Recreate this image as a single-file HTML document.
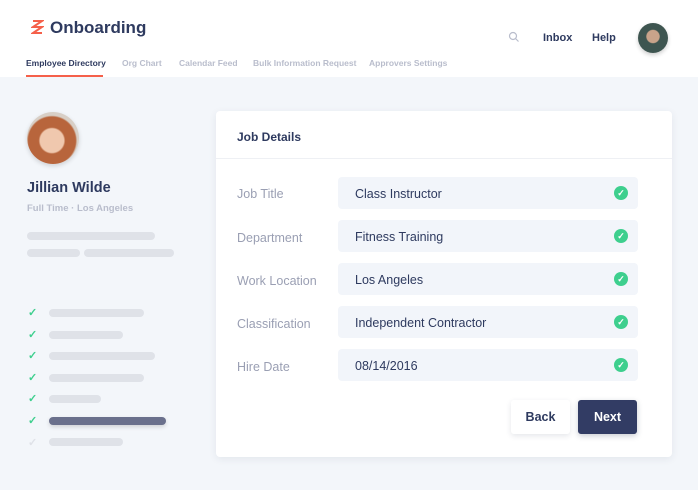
<!DOCTYPE html><html><head><style>
*{margin:0;padding:0;box-sizing:border-box}
body{width:698px;height:490px;overflow:hidden;background:#f3f6fa;font-family:"Liberation Sans",sans-serif;position:relative;color:#2e3a5f}
.a{position:absolute}
.hdr{left:0;top:0;width:698px;height:77px;background:#fff}
.tab{top:58px;font-size:8.5px;font-weight:bold;color:#b9bdcc}
.bar{height:8px;border-radius:4px;background:#dfe2e8}
.chk{color:#3ecf8e;font-size:11px;font-weight:bold}
.lbl{left:237px;font-size:12.5px;color:#9a9fb3}
.fld{left:338px;width:300px;height:32px;background:#f2f5fa;border-radius:4px;font-size:12.5px;color:#2e3a5f;padding:10px 0 0 17px}
.ok{position:absolute;right:10px;top:9px;width:14px;height:14px;border-radius:50%;background:#3ecf8e;color:#fff;font-size:9px;text-align:center;line-height:14px;font-weight:bold}
</style></head><body>
<div class="a hdr"></div>
<svg class="a" style="left:31px;top:19px" width="13" height="18" viewBox="0 0 13 18"><path d="M2 2h9L2 8l9 0L2 14h9" fill="none" stroke="#f5604a" stroke-width="2"/></svg>
<div class="a" style="left:50px;top:18px;font-size:17px;font-weight:bold;color:#2e3a5f">Onboarding</div>
<div class="a tab" style="left:26px;color:#2e3a5f">Employee Directory</div>
<div class="a" style="left:26px;top:75px;width:77px;height:2px;background:#f5604a"></div>
<div class="a tab" style="left:122px">Org Chart</div>
<div class="a tab" style="left:179px">Calendar Feed</div>
<div class="a tab" style="left:253px">Bulk Information Request</div>
<div class="a tab" style="left:369px">Approvers Settings</div>
<svg class="a" style="left:508px;top:31px" width="12" height="12"><circle cx="5" cy="5" r="3.5" fill="none" stroke="#b9bdcc" stroke-width="1.2"/><path d="M7.5 7.5l3 3" stroke="#b9bdcc" stroke-width="1.2"/></svg>
<div class="a" style="left:543px;top:32px;font-size:11px;font-weight:bold">Inbox</div>
<div class="a" style="left:592px;top:32px;font-size:11px;font-weight:bold">Help</div>
<div class="a" style="left:638px;top:23px;width:30px;height:30px;border-radius:50%;background:radial-gradient(circle at 50% 45%,#c9a38a 0 28%,#3e5550 32%);box-shadow:0 2px 4px rgba(0,0,0,.2)"></div>
<div class="a" style="left:27px;top:112px;width:52px;height:52px;border-radius:50%;background:radial-gradient(circle at 48% 55%,#f0c8ae 0 30%,#b8653c 34% 60%,#d8cfc6 64%);box-shadow:0 2px 5px rgba(0,0,0,.15)"></div>
<div class="a" style="left:27px;top:180px;font-size:14.5px;font-weight:bold">Jillian Wilde</div>
<div class="a" style="left:27px;top:203px;font-size:9.5px;font-weight:bold;color:#b9bdcc">Full Time · Los Angeles</div>
<div class="a bar" style="left:27px;top:232px;width:128px"></div>
<div class="a bar" style="left:27px;top:249px;width:53px"></div>
<div class="a bar" style="left:84px;top:249px;width:90px"></div>
<div class="a chk" style="left:28px;top:306px">✓</div><div class="a bar" style="left:49px;top:309px;width:95px"></div>
<div class="a chk" style="left:28px;top:328px">✓</div><div class="a bar" style="left:49px;top:331px;width:74px"></div>
<div class="a chk" style="left:28px;top:349px">✓</div><div class="a bar" style="left:49px;top:352px;width:106px"></div>
<div class="a chk" style="left:28px;top:371px">✓</div><div class="a bar" style="left:49px;top:374px;width:95px"></div>
<div class="a chk" style="left:28px;top:392px">✓</div><div class="a bar" style="left:49px;top:395px;width:52px"></div>
<div class="a chk" style="left:28px;top:414px">✓</div><div class="a bar" style="left:49px;top:417px;width:117px;background:#6a708c;box-shadow:0 2px 4px rgba(0,0,0,.15)"></div>
<div class="a chk" style="left:28px;top:436px;color:#dfe2e8">✓</div><div class="a bar" style="left:49px;top:438px;width:74px"></div>
<div class="a" style="left:216px;top:111px;width:456px;height:346px;background:#fff;border-radius:4px;box-shadow:0 2px 8px rgba(40,50,80,.08)"></div>
<div class="a" style="left:216px;top:158px;width:456px;height:1px;background:#eef0f4"></div>
<div class="a" style="left:237px;top:130px;font-size:12px;font-weight:bold">Job Details</div>
<div class="a lbl" style="top:187px">Job Title</div><div class="a fld" style="top:177px">Class Instructor<span class="ok">✓</span></div>
<div class="a lbl" style="top:231px">Department</div><div class="a fld" style="top:220px">Fitness Training<span class="ok">✓</span></div>
<div class="a lbl" style="top:274px">Work Location</div><div class="a fld" style="top:263px">Los Angeles<span class="ok">✓</span></div>
<div class="a lbl" style="top:317px">Classification</div><div class="a fld" style="top:306px">Independent Contractor<span class="ok">✓</span></div>
<div class="a lbl" style="top:360px">Hire Date</div><div class="a fld" style="top:349px">08/14/2016<span class="ok">✓</span></div>
<div class="a" style="left:511px;top:400px;width:59px;height:34px;background:#fff;border-radius:3px;box-shadow:0 2px 6px rgba(40,50,80,.12);font-size:12.5px;font-weight:bold;text-align:center;line-height:34px">Back</div>
<div class="a" style="left:578px;top:400px;width:59px;height:34px;background:#323c64;border-radius:3px;box-shadow:0 2px 6px rgba(40,50,80,.25);font-size:12.5px;font-weight:bold;color:#fff;text-align:center;line-height:34px">Next</div>
</body></html>
